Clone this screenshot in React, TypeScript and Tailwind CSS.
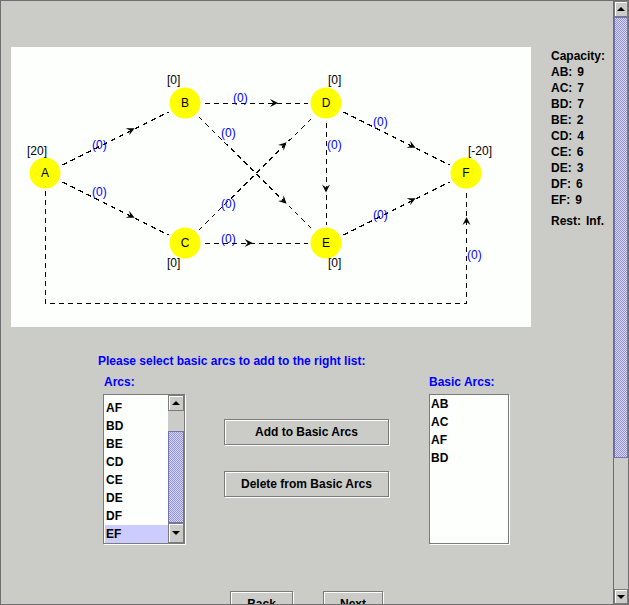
import React from "react";

type P = [number, number];
const N: Record<string, P> = {
  A: [45, 173],
  B: [185, 103],
  C: [185, 243],
  D: [326, 103],
  E: [326, 243],
  F: [466, 173],
};

const EDGES: [string, string, number][] = [
  ["A", "B", 0.64],
  ["A", "C", 0.64],
  ["B", "D", 0.66],
  ["B", "E", 0.72],
  ["C", "D", 0.72],
  ["C", "E", 0.48],
  ["D", "E", 0.64],
  ["D", "F", 0.64],
  ["E", "F", 0.64],
];

const EDGE_LABELS: P[] = [
  [92, 149],
  [92, 196],
  [233, 102],
  [221, 137],
  [327, 149],
  [373, 126],
  [221, 208],
  [221, 243],
  [373, 219],
  [467, 259],
];

function Arrow({ x, y, angle }: { x: number; y: number; angle: number }) {
  return (
    <polygon
      points="0,0 -8,-4 -5,0 -8,4"
      fill="#000"
      transform={`translate(${x} ${y}) rotate(${angle})`}
    />
  );
}

function Graph() {
  const font = "'Liberation Sans', Arial, sans-serif";
  return (
    <svg width={520} height={280} className="block">
      <g transform="translate(-11 -47)" fontFamily={font} fontSize={12}>
        {EDGES.map(([a, b, f]) => {
          const [x1, y1] = N[a];
          const [x2, y2] = N[b];
          const dx = x2 - x1;
          const dy = y2 - y1;
          const len = Math.hypot(dx, dy);
          const ux = dx / len;
          const uy = dy / len;
          const t = 19;
          const ang = (Math.atan2(dy, dx) * 180) / Math.PI;
          return (
            <g key={a + b}>
              <line
                x1={x1 + ux * t + 0.5}
                y1={y1 + uy * t + 0.5}
                x2={x2 - ux * t + 0.5}
                y2={y2 - uy * t + 0.5}
                stroke="#000"
                strokeWidth={1}
                strokeDasharray="5 4"
                shapeRendering="crispEdges"
              />
              <Arrow x={x1 + dx * f} y={y1 + dy * f} angle={ang} />
            </g>
          );
        })}
        <path
          d="M45.5 191 V303.5 H466.5 V191"
          fill="none"
          stroke="#000"
          strokeWidth={1}
          strokeDasharray="5 4"
          shapeRendering="crispEdges"
        />
        <Arrow x={466.5} y={217} angle={-90} />
        {Object.entries(N).map(([k, [x, y]]) => (
          <g key={k}>
            <circle cx={x} cy={y} r={15.5} fill="#ffff00" />
            <text x={x} y={y + 4} textAnchor="middle" fill="#000">
              {k}
            </text>
          </g>
        ))}
        <text x={27} y={155} fill="#000">[20]</text>
        <text x={167} y={84} fill="#000">[0]</text>
        <text x={328} y={84} fill="#000">[0]</text>
        <text x={468} y={155} fill="#000">[-20]</text>
        <text x={167} y={267} fill="#000">[0]</text>
        <text x={328} y={267} fill="#000">[0]</text>
        {EDGE_LABELS.map(([x, y], i) => (
          <text key={i} x={x} y={y} fill="#0000ff">
            (0)
          </text>
        ))}
      </g>
    </svg>
  );
}

function UpTri() {
  return <div className="w-0 h-0 border-x-[4px] border-x-transparent border-b-[4px] border-b-black" />;
}
function DownTri() {
  return <div className="w-0 h-0 border-x-[4px] border-x-transparent border-t-[4px] border-t-black" />;
}

const thumb =
  "bg-[#c6c6f2] bg-[repeating-conic-gradient(#9494d0_0_25%,#d6d6ff_0_50%)] bg-[length:2px_2px] border border-[#7272b4]";
const scrollBtn =
  "flex items-center justify-center bg-[#cbccc8] border border-[#7b7b7b] shadow-[inset_1px_1px_0_#ffffff]";

function Button({ label, className }: { label: string; className: string }) {
  return (
    <div
      className={`flex items-center justify-center h-[26px] bg-[#cbccc8] border border-[#7b7b7b] shadow-[inset_1px_1px_0_#ffffff,1px_1px_0_#ffffff] text-[12px] font-bold text-black ${className}`}
    >
      {label}
    </div>
  );
}

export default function App() {
  const capacities = ["AB: 9", "AC: 7", "BD: 7", "BE: 2", "CD: 4", "CE: 6", "DE: 3", "DF: 6", "EF: 9"];
  const arcs = ["AF", "BD", "BE", "CD", "CE", "DE", "DF", "EF"];
  const basic = ["AB", "AC", "AF", "BD"];
  return (
    <div className="w-[629px] h-[605px] overflow-hidden border border-[#6f6f6f] bg-[#cbccc8] flex font-['Liberation_Sans',Arial,sans-serif] text-black">
      <div className="flex-1 flex flex-col">
        <div className="flex mt-[46px]">
          <div className="ml-[10px] w-[520px] h-[280px] bg-[#fdfffc]">
            <Graph />
          </div>
          <div className="ml-[20px] pt-[1px] text-[12px] font-bold leading-[16px]">
            <div>Capacity:</div>
            {capacities.map((c) => {
              const [a, b] = c.split(" ");
              return (
                <div key={c} className="flex gap-[5px]">
                  <span>{a}</span>
                  <span>{b}</span>
                </div>
              );
            })}
            <div className="mt-[5px] flex gap-[5px]">
              <span>Rest:</span>
              <span>Inf.</span>
            </div>
          </div>
        </div>

        <div className="mt-[26px] ml-[97px] text-[12px] font-bold leading-[16px] text-[#0000ff]">
          Please select basic arcs to add to the right list:
        </div>

        <div className="flex mt-[5px] ml-[102px]">
          <div className="w-[82px]">
            <div className="pl-[1px] text-[12px] font-bold leading-[16px] text-[#0000ff]">Arcs:</div>
            <div className="mt-[4px] w-[82px] h-[150px] border border-[#7b7b7b] shadow-[1px_1px_0_#ffffff] bg-[#fdfffc] flex">
              <div className="flex-1 overflow-hidden pt-[4px]">
                {arcs.map((a) => (
                  <div
                    key={a}
                    className={`h-[18px] leading-[18px] ml-[1px] pl-[1px] text-[12px] font-bold ${
                      a === "EF" ? "bg-[#ccccff]" : ""
                    }`}
                  >
                    {a}
                  </div>
                ))}
              </div>
              <div className="w-[16px] flex flex-col bg-[#cbccc8]">
                <div className={`h-[16px] ${scrollBtn}`}>
                  <UpTri />
                </div>
                <div className="h-[20px]" />
                <div className={`h-[92px] ${thumb}`} />
                <div className={`flex-1 ${scrollBtn}`}>
                  <DownTri />
                </div>
              </div>
            </div>
          </div>

          <div className="ml-[39px] pt-[45px] flex flex-col">
            <Button label="Add to Basic Arcs" className="w-[165px]" />
            <Button label="Delete from Basic Arcs" className="w-[165px] mt-[26px]" />
          </div>

          <div className="ml-[40px]">
            <div className="text-[12px] font-bold leading-[16px] text-[#0000ff]">Basic Arcs:</div>
            <div className="mt-[4px] w-[80px] h-[150px] border border-[#7b7b7b] shadow-[1px_1px_0_#ffffff] bg-[#fdfffc]">
              {basic.map((a) => (
                <div key={a} className="h-[18px] leading-[18px] pl-[1px] text-[12px] font-bold">
                  {a}
                </div>
              ))}
            </div>
          </div>
        </div>

        <div className="flex mt-[47px] ml-[229px]">
          <Button label="Back" className="w-[63px]" />
          <Button label="Next" className="w-[60px] ml-[30px]" />
        </div>
      </div>

      <div className="w-[15px] flex flex-col border-l border-[#6f6f6f] bg-[#cbccc8]">
        <div className={`h-[16px] ${scrollBtn}`}>
          <UpTri />
        </div>
        <div className={`h-[441px] ${thumb}`} />
        <div className="flex-1" />
        <div className={`h-[15px] ${scrollBtn}`}>
          <DownTri />
        </div>
      </div>
    </div>
  );
}
